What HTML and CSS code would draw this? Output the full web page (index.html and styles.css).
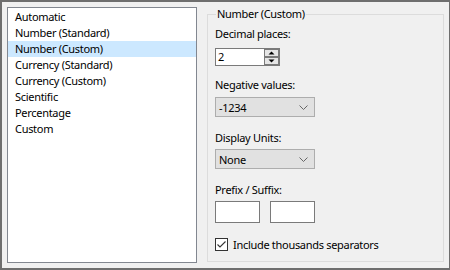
FILE: index.html
```html
<!DOCTYPE html>
<html lang="en">

<head>
    <meta charset="UTF-8">
    <meta name="viewport" content="width=device-width, initial-scale=1.0">
    <title>Format</title>
    <link rel="stylesheet" href="styles.css">
</head>

<body>
    <div class="dialog">
        <ul class="format-list">
            <li>Automatic</li>
            <li>Number (Standard)</li>
            <li class="selected">Number (Custom)</li>
            <li>Currency (Standard)</li>
            <li>Currency (Custom)</li>
            <li>Scientific</li>
            <li>Percentage</li>
            <li>Custom</li>
        </ul>

        <fieldset class="options">
            <legend>Number (Custom)</legend>

            <div class="label decimal-label">Decimal places:</div>
            <div class="spinner">
                <span class="spin-value">2</span>
                <div class="spin-buttons">
                    <div class="spin-btn">
                        <svg width="7" height="4" viewBox="0 0 7 4"><path d="M0.5 3.5 L3.5 0.5 L6.5 3.5 Z" fill="#000"/></svg>
                    </div>
                    <div class="spin-btn">
                        <svg width="7" height="4" viewBox="0 0 7 4"><path d="M0.5 0.5 L3.5 3.5 L6.5 0.5 Z" fill="#000"/></svg>
                    </div>
                </div>
            </div>

            <div class="label negative-label">Negative values:</div>
            <div class="dropdown">
                <span>-1234</span>
                <svg class="chevron" width="9" height="5" viewBox="0 0 9 5"><path d="M0.5 0.5 L4.5 4.5 L8.5 0.5" fill="none" stroke="#666" stroke-width="1"/></svg>
            </div>

            <div class="label units-label">Display Units:</div>
            <div class="dropdown">
                <span>None</span>
                <svg class="chevron" width="9" height="5" viewBox="0 0 9 5"><path d="M0.5 0.5 L4.5 4.5 L8.5 0.5" fill="none" stroke="#666" stroke-width="1"/></svg>
            </div>

            <div class="label prefix-label">Prefix / Suffix:</div>
            <div class="affix-row">
                <div class="affix-box"></div>
                <div class="affix-box"></div>
            </div>

            <label class="check-row">
                <span class="checkbox">
                    <svg width="11" height="11" viewBox="0 0 11 11"><path d="M1.5 5.5 L4 8 L9.5 2.5" fill="none" stroke="#333" stroke-width="1.1"/></svg>
                </span>
                Include thousands separators
            </label>
        </fieldset>
    </div>
</body>

</html>
```

FILE: styles.css
```css
body {
    margin: 0;
    font-family: "Noto Sans", "Segoe UI", sans-serif;
    font-size: 11px;
    letter-spacing: -0.3px;
    color: #000;
}

.dialog {
    width: 450px;
    height: 270px;
    box-sizing: border-box;
    border: 2px solid #6e6e6e;
    border-right-width: 1px;
    background-color: #f0f0f0;
    padding: 5px;
    display: flex;
    gap: 10px;
}

.format-list {
    width: 190px;
    box-sizing: border-box;
    margin: 0;
    padding: 1px 0 0 0;
    list-style: none;
    background-color: #fff;
    border: 1px solid #828790;
}

.format-list li {
    height: 16px;
    line-height: 16px;
    padding-left: 7px;
    white-space: nowrap;
}

.format-list .selected {
    background-color: #cce8ff;
}

.options {
    flex: 1;
    margin: 0 0 1px 0;
    padding: 0 7px;
    border: 1px solid #dcdcdc;
    min-width: 0;
    display: flex;
    flex-direction: column;
    align-items: flex-start;
}

.options legend {
    line-height: 14px;
    padding: 0 1px;
    margin-left: 1px;
}

.label {
    line-height: 15px;
}

.decimal-label {
    margin-top: 5px;
    margin-bottom: 7px;
}

.negative-label {
    margin-top: 11px;
    margin-bottom: 5px;
}

.units-label {
    margin-top: 13px;
    margin-bottom: 4px;
}

.prefix-label {
    margin-top: 13px;
    margin-bottom: 4px;
}

.spinner {
    width: 65px;
    height: 18px;
    box-sizing: border-box;
    border: 1px solid #7a7a7a;
    background-color: #fff;
    display: flex;
    align-items: center;
    justify-content: space-between;
}

.spin-value {
    padding-left: 2px;
    line-height: 16px;
}

.spin-buttons {
    width: 15px;
    height: 16px;
    display: flex;
    flex-direction: column;
}

.spin-btn {
    flex: 1;
    box-sizing: border-box;
    border: 1px solid #7a7a7a;
    background-color: #e5e5e5;
    display: flex;
    align-items: center;
    justify-content: center;
}

.dropdown {
    width: 100px;
    height: 20px;
    box-sizing: border-box;
    border: 1px solid #adadad;
    background-color: #e1e1e1;
    display: flex;
    align-items: center;
    justify-content: space-between;
    padding: 0 6px 0 3px;
}

.affix-row {
    display: flex;
    gap: 10px;
}

.affix-box {
    width: 45px;
    height: 22px;
    box-sizing: border-box;
    border: 1px solid #7a7a7a;
    background-color: #fff;
}

.check-row {
    margin-top: 14px;
    display: flex;
    align-items: center;
    gap: 5px;
    line-height: 15px;
}

.checkbox {
    width: 13px;
    height: 13px;
    box-sizing: border-box;
    border: 1px solid #333;
    background-color: #fff;
    display: flex;
    align-items: center;
    justify-content: center;
}
```
